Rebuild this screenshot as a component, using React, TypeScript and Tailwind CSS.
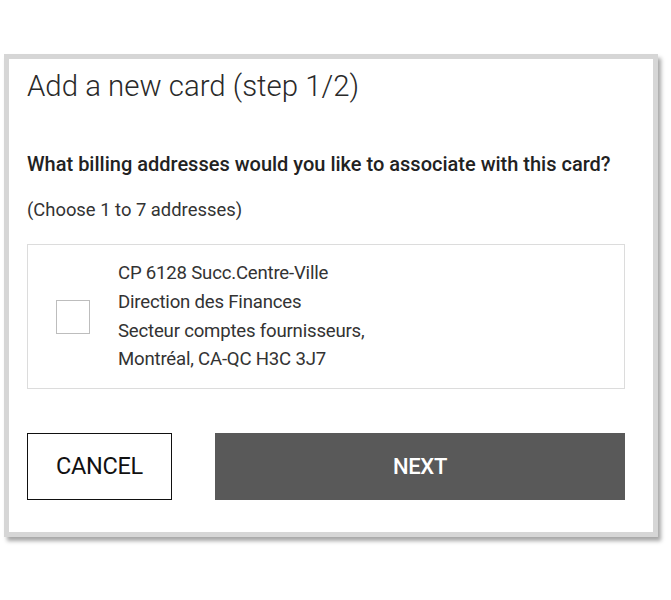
import { useState } from 'react';

const address = [
  'CP 6128 Succ.Centre-Ville',
  'Direction des Finances',
  'Secteur comptes fournisseurs,',
  'Montréal, CA-QC H3C 3J7',
];

export default function App() {
  const [checked, setChecked] = useState(false);

  return (
    <div className="min-h-[600px] bg-white pt-[54px] pl-[4px] font-['Roboto',sans-serif] text-[#222]">
      <div className="w-[654px] h-[483px] border-[5px] border-[#d6d6d6] bg-white shadow-[3px_4px_4px_rgba(0,0,0,0.35)]">
        <div className="pl-[18px] pr-[28px] pt-[9px]">
          <h2 className="text-[29.4px] font-light leading-[36px] text-[#2a2a2a]">
            Add a new card (step 1/2)
          </h2>

          <p className="mt-[48px] text-[20px] font-medium leading-[24px]">
            What billing addresses would you like to associate with this card?
          </p>
          <p className="mt-[22px] text-[18.4px] leading-[24px] text-[#333]">
            (Choose 1 to 7 addresses)
          </p>

          <div className="mt-[22px] h-[145px] border border-[#dcdcdc] flex items-center">
            <button
              type="button"
              onClick={() => setChecked(!checked)}
              className="ml-[28px] w-[34px] h-[34px] border border-[#bdbdbd] bg-white flex items-center justify-center"
              aria-label="Select address"
            >
              {checked && <span className="text-[#333] text-lg">✓</span>}
            </button>
            <div className="ml-[28px] text-[18.6px] leading-[28.7px] text-[#333] tracking-[-0.2px]">
              {address.map((line) => (
                <div key={line}>{line}</div>
              ))}
            </div>
          </div>

          <div className="mt-[44px] flex gap-[43px]">
            <button
              type="button"
              className="w-[145px] h-[67px] border-[1.5px] border-[#111] bg-white text-[23.5px] text-[#111] tracking-[-0.3px]"
            >
              CANCEL
            </button>
            <button
              type="button"
              className="flex-1 h-[67px] bg-[#595959] text-white text-[22px] font-medium tracking-[-0.3px]"
            >
              NEXT
            </button>
          </div>
        </div>
      </div>
    </div>
  );
}
